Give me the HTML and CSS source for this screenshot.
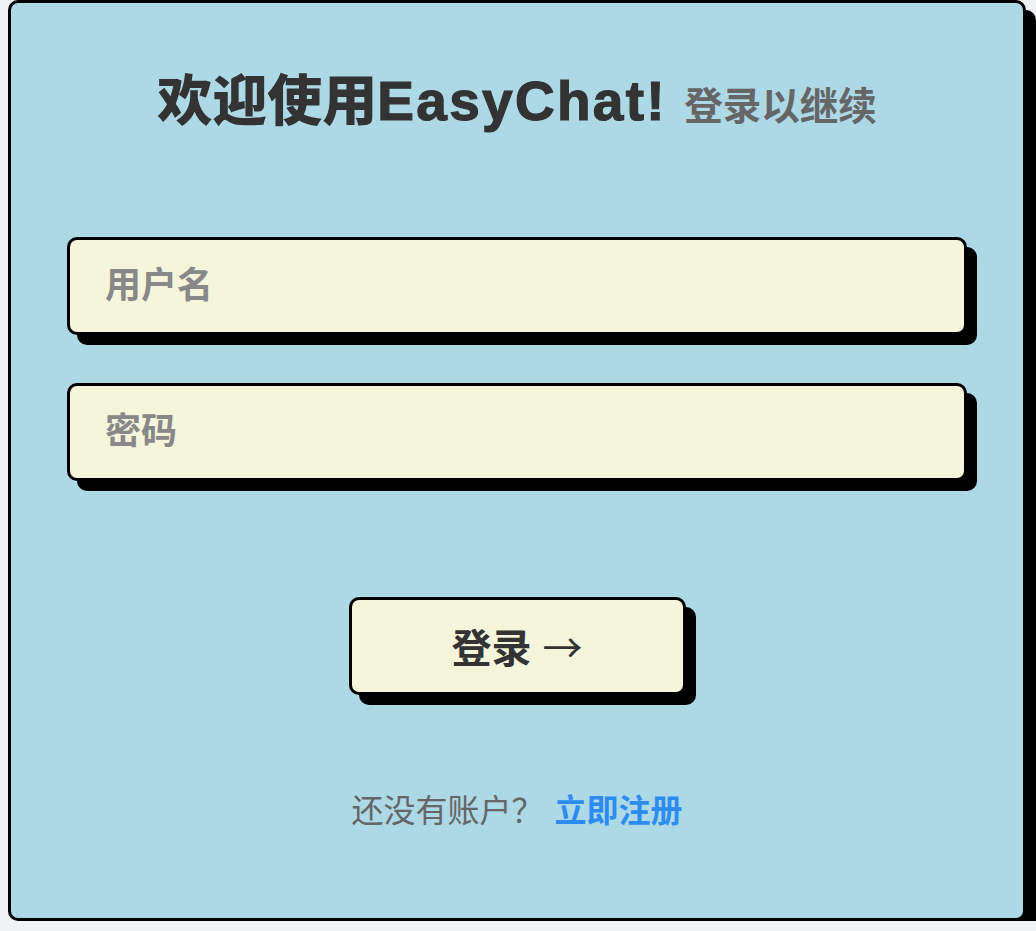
FILE: index.html
```html
<!DOCTYPE html>
<html lang="zh-CN">
<head>
<meta charset="utf-8">
<title>EasyChat 登录</title>
<link rel="stylesheet" href="styles.css">
</head>
<body>
<div class="card">
  <h1 class="title">欢迎使用<span class="brand">EasyChat!</span> <span class="subtitle">登录以继续</span></h1>
  <form class="form">
    <input class="field" type="text" placeholder="用户名">
    <input class="field" type="password" placeholder="密码">
    <button class="submit" type="button">登录 <span class="arrow">→</span></button>
  </form>
  <p class="footer">还没有账户？ <a class="link" href="#">立即注册</a></p>
</div>
</body>
</html>
```
FILE: styles.css
```css
html, body {
  margin: 0;
  padding: 0;
  background: #f1f2f6;
  overflow: hidden;
}
body {
  font-family: "Liberation Sans", "Noto Sans CJK SC", sans-serif;
}
.card {
  box-sizing: border-box;
  height: 921px;
  margin: 0 10px 0 8px;
  background: #add8e6;
  border: 3px solid #000;
  border-radius: 10px;
  box-shadow: 10px 10px 0 #000;
  padding: 67px 56px 0;
}
.title {
  margin: 0;
  text-align: center;
  font-size: 55px;
  line-height: 62px;
  font-weight: 900;
  color: #333;
}
.brand {
  letter-spacing: 2.3px;
  -webkit-text-stroke: 1.2px #333;
}
.subtitle {
  font-size: 38.5px;
  font-weight: bold;
  color: #666;
  margin-left: 2px;
}
.form {
  display: flex;
  flex-direction: column;
  align-items: center;
  margin-top: 99px;
}
.field {
  box-sizing: border-box;
  width: 100%;
  height: 98px;
  margin: 0 0 48px;
  padding: 0 0 0 35px;
  background: #f5f5dc;
  border: 3px solid #000;
  border-radius: 10px;
  box-shadow: 10px 10px 0 #000;
  font-family: inherit;
  font-size: 36px;
  font-weight: bold;
  color: #333;
  outline: none;
}
.field::placeholder {
  color: #888;
  opacity: 1;
}
.submit {
  box-sizing: border-box;
  width: 337px;
  height: 98px;
  margin-top: 68px;
  background: #f5f5dc;
  border: 3px solid #000;
  border-radius: 10px;
  box-shadow: 10px 10px 0 #000;
  font-family: inherit;
  font-size: 40px;
  font-weight: bold;
  color: #333;
  cursor: pointer;
}
.arrow {
  font-family: "Noto Sans CJK SC", sans-serif;
  font-weight: normal;
}
.footer {
  margin: 94px 0 0;
  text-align: center;
  font-size: 32px;
  line-height: 45px;
  color: #666;
}
.link {
  color: #2d8cf0;
  font-weight: bold;
  text-decoration: none;
  margin-left: 2px;
}
```
